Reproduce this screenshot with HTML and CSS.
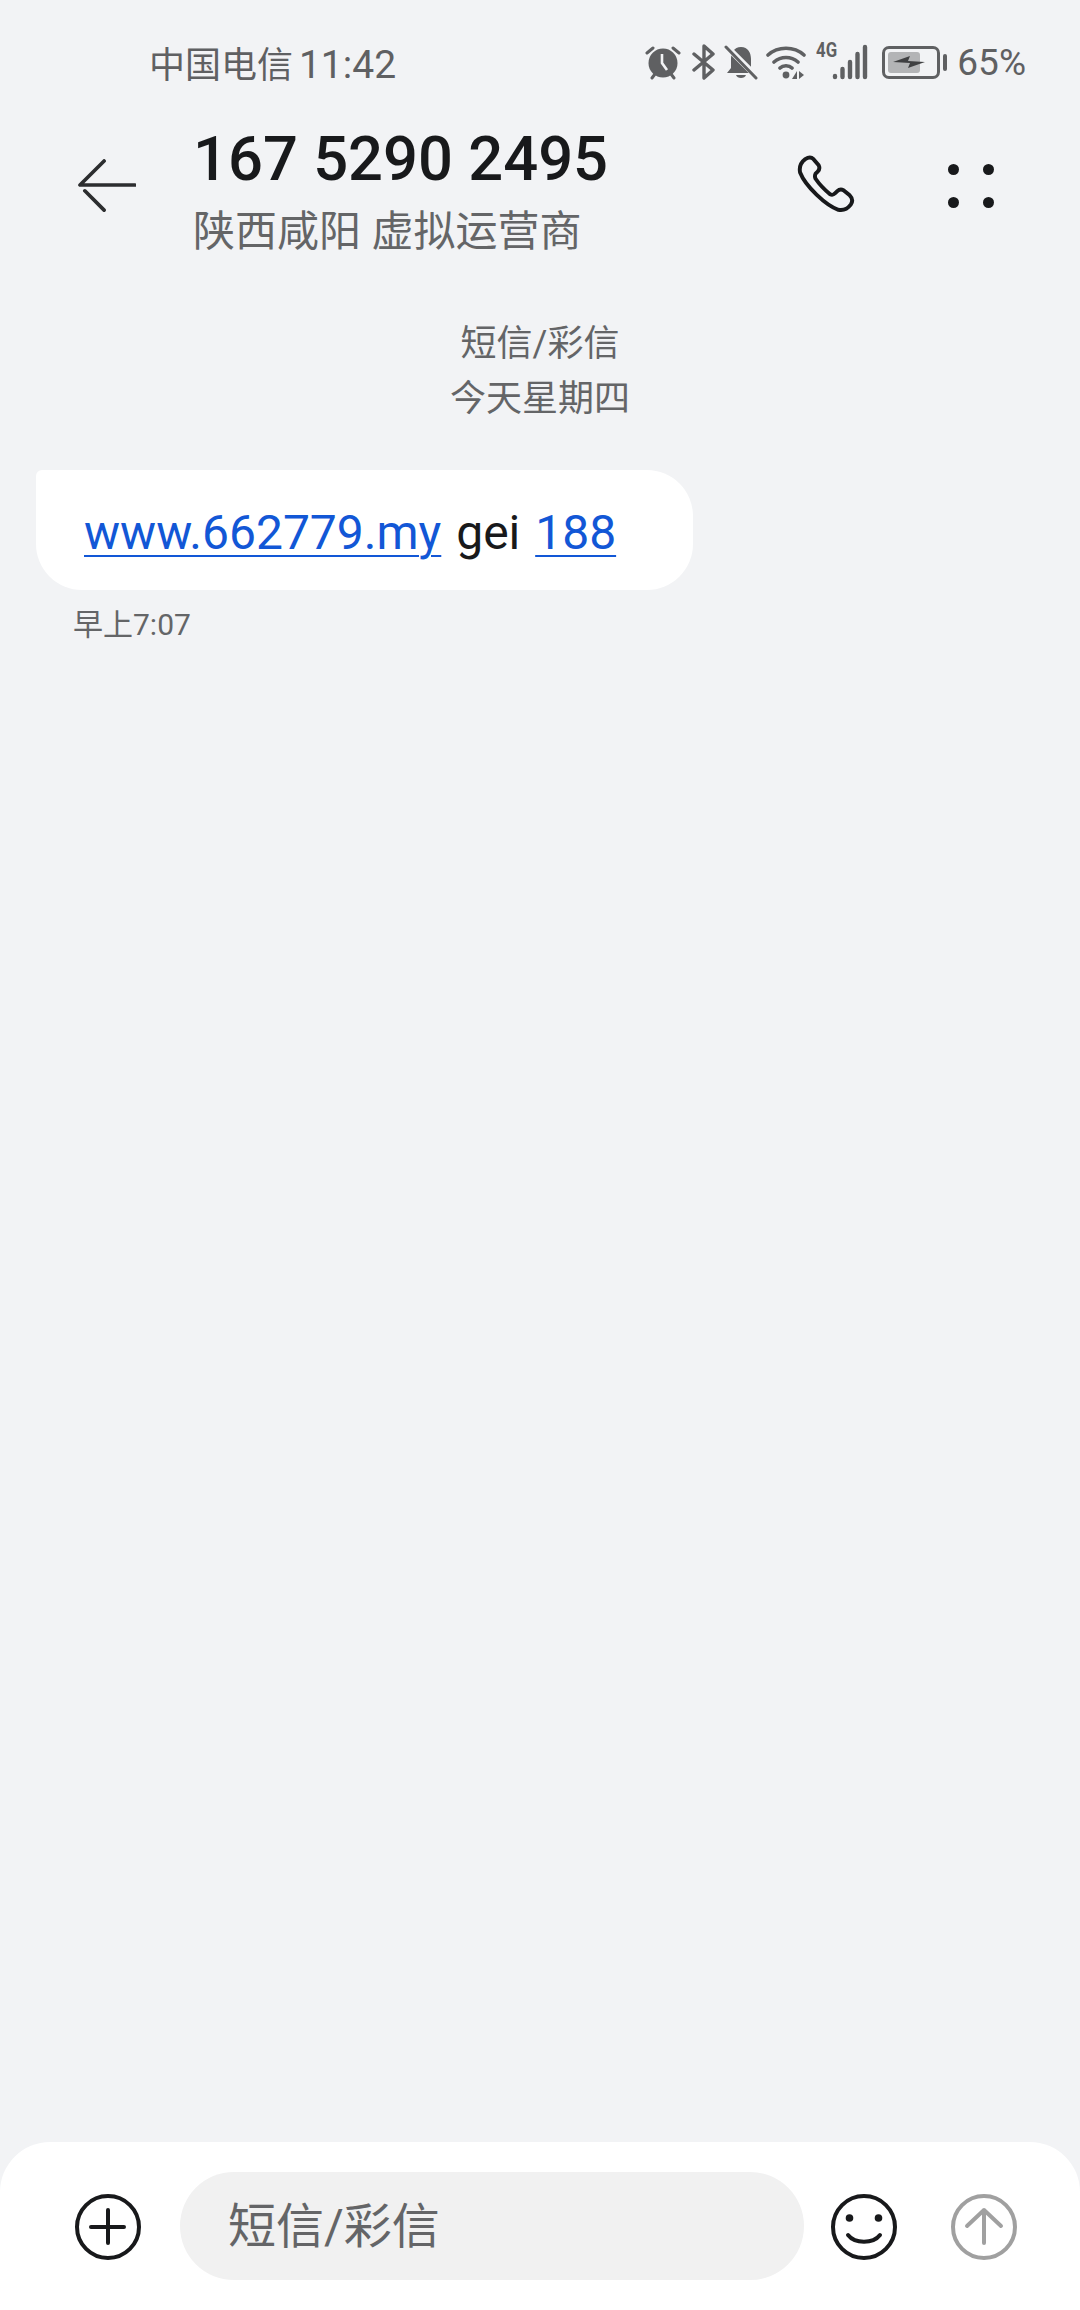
FILE: index.html
```html
<!DOCTYPE html>
<html lang="zh-CN">

<head>
    <title>短信</title>
    <link rel="stylesheet" href="styles.css">
</head>

<body>
    <div class="status-bar">
        <span class="carrier">中国电信 <span class="clock">11:42</span></span>
        <div class="status-icons">
            <svg class="ic-alarm" viewBox="0 0 38 36" width="38" height="36">
                <circle cx="19" cy="19" r="14.500" fill="#5f6062" />
                <path d="M18 10v9l5 7" fill="none" stroke="#f2f3f5" stroke-width="2.600" />
                <path d="M3 9l6-5M35 9l-6-5M8 34l3-4M30 34l-3-4" stroke="#5f6062" stroke-width="3" stroke-linecap="round" />
            </svg>
            <svg class="ic-bt" viewBox="0 0 24 36" width="24" height="36">
                <path d="M2 10l19 16-9 8V2l9 8L2 26" fill="none" stroke="#5f6062" stroke-width="3.400" stroke-linecap="round" stroke-linejoin="round" />
            </svg>
            <svg class="ic-bell" viewBox="0 0 34 36" width="34" height="36">
                <path d="M17 3c7 0 10 6 10 12v9l4 5H3l4-5v-9C7 9 10 3 17 3z" fill="#5f6062" />
                <path d="M12 31c1 4 9 4 10 0z" fill="#5f6062" />
                <path d="M0 0l34 34" stroke="#f2f3f5" stroke-width="6" />
                <path d="M2 3l30 31" stroke="#5f6062" stroke-width="3" stroke-linecap="round" />
            </svg>
            <svg class="ic-wifi" viewBox="0 0 40 36" width="40" height="36">
                <path d="M2 11c10-9 26-9 36 0M8 18c7-6 17-6 24 0M14 24c3-3 9-3 12 0" fill="none" stroke="#5f6062" stroke-width="3.600" stroke-linecap="round" />
                <circle cx="20" cy="31" r="3.400" fill="#5f6062" />
                <path d="M31 35V27l-5 8zM33 27v8l5-4z" fill="#5f6062" />
            </svg>
            <div class="signal">
                <span class="net">4G</span>
                <svg viewBox="0 0 36 36" width="36" height="36">
                    <path d="M3 32v1M10.500 25v8M18 18v15M25.500 10v23M33 3v30" fill="none" stroke="#5f6062" stroke-width="4.400" stroke-linecap="round" />
                </svg>
            </div>
            <div class="battery">
                <div class="battery-fill"></div>
                <svg class="bolt" viewBox="0 0 32 12" width="32" height="12">
                    <path d="M0 6L17 0l-2 5 17 1-17 6 2-5z" fill="#3f4042" />
                </svg>
            </div>
            <span class="battery-nub"></span>
            <span class="percent">65%</span>
        </div>
    </div>

    <header class="top-bar">
        <svg class="back" viewBox="0 0 60 56" width="58" height="54">
            <path d="M27 2L2 27h57M7 33l20 20" fill="none" stroke="#2c2d2f" stroke-width="3.800" stroke-linecap="round" stroke-linejoin="round" />
        </svg>
        <div class="contact">
            <h1>167 5290 2495</h1>
            <p>陕西咸阳 虚拟运营商</p>
        </div>
        <svg class="phone" viewBox="0 0 60 60" width="62" height="62">
            <path d="M8 4c3-2 6-2 8 0l5 6c1 2 1 4-1 6l-2 2c-1 2-1 3 0 5 4 6 8 10 14 15 2 1 3 1 5-1l2-2c2-2 4-2 6-1l6 5c3 3 3 6 1 9-3 4-7 6-12 5C28 49 8 30 3 17 2 12 4 7 8 4z" fill="none" stroke="#18191b" stroke-width="3.800" stroke-linejoin="round" />
        </svg>
        <div class="more">
            <span></span><span></span><span></span><span></span>
        </div>
    </header>

    <main class="thread">
        <div class="thread-head">
            <div>短信/彩信</div>
            <div>今天星期四</div>
        </div>
        <div class="bubble">
            <a>www.662779.my</a> gei <a>188</a>
        </div>
        <div class="msg-time">早上7:07</div>
    </main>

    <footer class="composer">
        <svg class="ic-round" viewBox="0 0 68 68" width="68" height="68">
            <circle cx="34" cy="34" r="31" fill="none" stroke="#18191b" stroke-width="4" />
            <path d="M34 17v33M17 34h33" stroke="#18191b" stroke-width="4" stroke-linecap="round" />
        </svg>
        <div class="input-box">短信/彩信</div>
        <svg class="ic-round" viewBox="0 0 68 68" width="68" height="68">
            <circle cx="34" cy="34" r="31" fill="none" stroke="#18191b" stroke-width="4" />
            <circle cx="19.500" cy="25" r="3.800" fill="#18191b" />
            <circle cx="48.500" cy="25" r="3.800" fill="#18191b" />
            <path d="M18 42c7 9 25 9 32 0" fill="none" stroke="#18191b" stroke-width="4" stroke-linecap="round" />
        </svg>
        <svg class="ic-round" viewBox="0 0 68 68" width="68" height="68">
            <circle cx="34" cy="34" r="31" fill="none" stroke="#a0a0a0" stroke-width="4" />
            <path d="M34 50V17M17 33l17-16 17 16" fill="none" stroke="#a0a0a0" stroke-width="4" stroke-linecap="round" stroke-linejoin="round" />
        </svg>
    </footer>
</body>

</html>
```

FILE: styles.css
```css
body {
    margin: 0;
    height: 2310px;
    display: flex;
    flex-direction: column;
    background-color: #f2f3f5;
    font-family: Roboto, "Noto Sans CJK SC", sans-serif;
    overflow: hidden;
}

.status-bar {
    display: flex;
    justify-content: space-between;
    align-items: center;
    height: 36px;
    margin-top: 44px;
    padding: 0 54px 0 149px;
    color: #5f6062;
}

.carrier {
    font-size: 36px;
    word-spacing: -3px;
    white-space: nowrap;
}

.clock {
    font-size: 39px;
}

.status-icons {
    display: flex;
    align-items: center;
    gap: 8px;
}

.ic-alarm {
    margin-right: 2px;
}

.signal {
    position: relative;
    width: 54px;
    height: 36px;
    display: flex;
    justify-content: flex-end;
    align-items: flex-end;
}

.net {
    position: absolute;
    left: 2px;
    top: -6px;
    font-size: 21px;
    font-weight: 700;
    transform: scaleX(0.8);
    transform-origin: left;
}

.battery {
    position: relative;
    width: 58px;
    height: 33px;
    margin-left: 6px;
    box-sizing: border-box;
    border: 3px solid #5f6062;
    border-radius: 7px;
    display: flex;
    align-items: center;
    padding-left: 3px;
}

.battery-fill {
    width: 32px;
    height: 21px;
    background-color: #b3b4b6;
    border-radius: 3px;
}

.bolt {
    position: absolute;
    left: 8px;
    top: 7px;
}

.battery-nub {
    width: 4px;
    height: 17px;
    margin-left: -5px;
    background-color: #5f6062;
    border-radius: 2px;
}

.percent {
    font-size: 37px;
    line-height: 38px;
    margin-top: 2px;
    margin-left: 2px;
}

.top-bar {
    display: flex;
    align-items: center;
    height: 146px;
    margin-top: 33px;
    padding-left: 78px;
}

.back {
    flex: none;
    margin-right: 57px;
}

.contact {
    width: 604px;
    padding-top: 2px;
}

.contact h1 {
    margin: 0;
    font-size: 61.500px;
    font-weight: 500;
    line-height: 90px;
    color: #18191b;
}

.contact p {
    margin: 0;
    font-size: 42px;
    line-height: 56px;
    color: #646567;
}

.phone {
    flex: none;
}

.more {
    display: grid;
    grid-template-columns: 11px 11px;
    grid-auto-rows: 11px;
    gap: 22px 24px;
    margin-left: 89px;
}

.more span {
    background-color: #18191b;
    border-radius: 50%;
}

.thread {
    flex: 1;
    display: flex;
    flex-direction: column;
    align-items: flex-start;
}

.thread-head {
    align-self: center;
    margin-top: 58px;
    text-align: center;
    font-size: 36px;
    line-height: 55px;
    color: #646567;
}

.bubble {
    margin: 43px 0 0 36px;
    padding: 0 77px 0 48px;
    height: 120px;
    line-height: 125px;
    background-color: #fff;
    border-radius: 6px 46px 46px 46px;
    font-size: 48px;
    word-spacing: 3px;
    color: #18191b;
}

.bubble a {
    color: #1257d6;
    text-decoration: underline;
    text-decoration-thickness: 2px;
    text-underline-offset: 6px;
}

.msg-time {
    margin: 15px 0 0 73px;
    font-size: 30px;
    line-height: 40px;
    color: #646567;
}

.composer {
    display: flex;
    align-items: center;
    height: 168px;
    padding: 0 56px 0 74px;
    background-color: #fff;
    border-radius: 50px 50px 0 0;
    box-sizing: border-box;
}

.ic-round {
    flex: none;
    margin-top: 2px;
}

.input-box {
    width: 576px;
    height: 108px;
    line-height: 110px;
    margin: 0 26px 0 38px;
    padding-left: 48px;
    background-color: #f1f1f1;
    border-radius: 54px;
    font-size: 48px;
    color: #646567;
}

.composer .ic-round:last-child {
    margin-left: 52px;
}
```
